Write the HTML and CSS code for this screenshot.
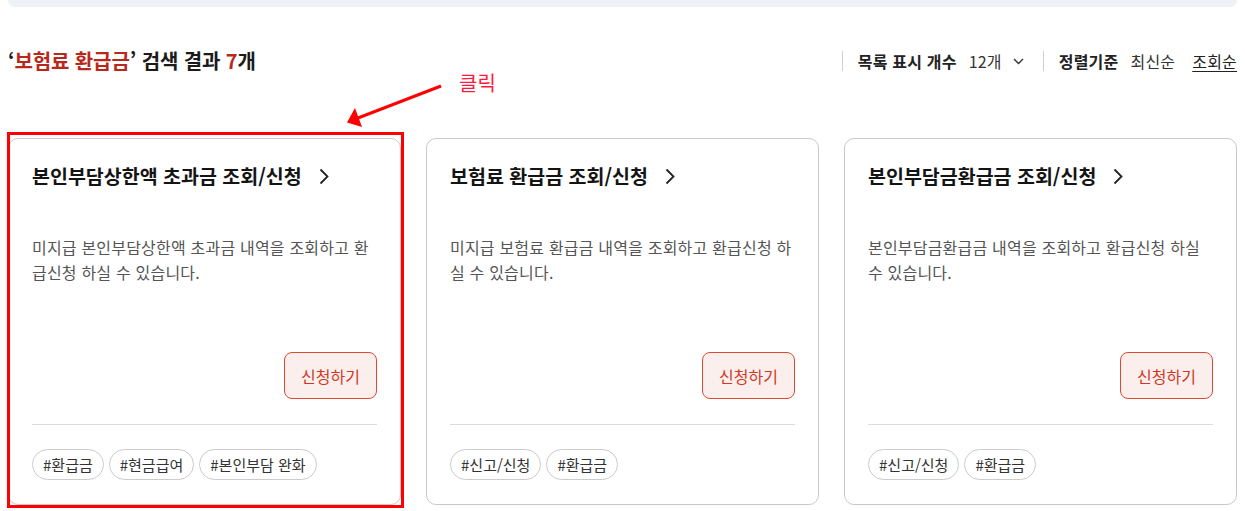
FILE: index.html
```html
<!DOCTYPE html>
<html lang="ko">
<head>
<meta charset="utf-8">
<title>검색 결과</title>
<link rel="stylesheet" href="styles.css">
</head>
<body>
<div class="page">
  <div class="topbar"></div>

  <div class="result-head">
    <h2 class="result-title"><span class="q">‘</span><span class="kw">보험료 환급금</span><span class="q">’</span> 검색 결과 <span class="kw">7</span>개</h2>
    <div class="controls">
      <span class="vdiv"></span>
      <span class="ctl-label">목록 표시 개수</span>
      <span class="ctl-select">12개
        <svg class="chev-down" width="11" height="7" viewBox="0 0 11 7"><path d="M1 1 L5.5 5.5 L10 1" fill="none" stroke="#333" stroke-width="1.4"/></svg>
      </span>
      <span class="vdiv"></span>
      <span class="ctl-label">정렬기준</span>
      <span class="ctl-opt">최신순</span>
      <span class="ctl-opt active">조회순</span>
    </div>
  </div>

  <div class="cards">
    <div class="card">
      <div class="card-title">본인부담상한액 초과금 조회/신청
        <svg class="chev-right" width="10" height="17" viewBox="0 0 10 17"><path d="M1.5 1.5 L8.5 8.5 L1.5 15.5" fill="none" stroke="#222" stroke-width="1.8"/></svg>
      </div>
      <p class="card-desc">미지급 본인부담상한액 초과금 내역을 조회하고 환급신청 하실 수 있습니다.</p>
      <div class="card-actions"><button class="btn-apply">신청하기</button></div>
      <div class="card-tags">
        <span class="tag">#환급금</span><span class="tag">#현금급여</span><span class="tag">#본인부담 완화</span>
      </div>
    </div>
    <div class="card">
      <div class="card-title">보험료 환급금 조회/신청
        <svg class="chev-right" width="10" height="17" viewBox="0 0 10 17"><path d="M1.5 1.5 L8.5 8.5 L1.5 15.5" fill="none" stroke="#222" stroke-width="1.8"/></svg>
      </div>
      <p class="card-desc">미지급 보험료 환급금 내역을 조회하고 환급신청 하실 수 있습니다.</p>
      <div class="card-actions"><button class="btn-apply">신청하기</button></div>
      <div class="card-tags">
        <span class="tag">#신고/신청</span><span class="tag">#환급금</span>
      </div>
    </div>
    <div class="card">
      <div class="card-title">본인부담금환급금 조회/신청
        <svg class="chev-right" width="10" height="17" viewBox="0 0 10 17"><path d="M1.5 1.5 L8.5 8.5 L1.5 15.5" fill="none" stroke="#222" stroke-width="1.8"/></svg>
      </div>
      <p class="card-desc">본인부담금환급금 내역을 조회하고 환급신청 하실 수 있습니다.</p>
      <div class="card-actions"><button class="btn-apply">신청하기</button></div>
      <div class="card-tags">
        <span class="tag">#신고/신청</span><span class="tag">#환급금</span>
      </div>
    </div>
  </div>

  <div class="annot-box"></div>
  <span class="annot-text">클릭</span>
  <svg class="annot-arrow" width="1245" height="511" viewBox="0 0 1245 511">
    <line x1="441" y1="86" x2="358" y2="118" stroke="#ff0000" stroke-width="3"/>
    <polygon points="355,108 347,122.5 362,127" fill="#ff0000"/>
  </svg>
</div>
</body>
</html>
```

FILE: styles.css
```css
* { box-sizing: border-box; }
html, body { margin: 0; padding: 0; background: #fff; }
body {
  font-family: "Noto Sans CJK KR", "Noto Sans", sans-serif;
  color: #222;
  overflow: hidden;
}
.page {
  position: relative;
  padding: 0 8px;
  height: 511px;
}
.topbar {
  height: 7px;
  background: #eef1f5;
  border-radius: 0 0 12px 12px;
}
.result-head {
  display: flex;
  justify-content: space-between;
  align-items: center;
  height: 30px;
  margin-top: 39px;
}
.result-title {
  margin: 0;
  font-size: 20px;
  font-weight: 700;
  letter-spacing: -0.1px;
  color: #1b1b1b;
  line-height: 30px;
}
.result-title .kw { color: #b8291b; }
.result-title .q { color: #1b1b1b; }
.controls {
  display: flex;
  align-items: center;
  font-size: 16px;
  letter-spacing: 0.2px;
  color: #333;
}
.vdiv {
  width: 1px;
  height: 20px;
  background: #cfcfcf;
}
.ctl-label {
  font-weight: 700;
  color: #222;
  margin-left: 15px;
}
.ctl-select {
  display: flex;
  align-items: center;
  margin-left: 12px;
  margin-right: 19px;
  gap: 11px;
}
.chev-down { display: block; }
.ctl-opt { margin-left: 12px; color: #333; }
.ctl-opt.active {
  margin-left: 17px;
  text-decoration: underline;
  text-underline-offset: 3px;
  color: #222;
}
.cards {
  display: grid;
  grid-template-columns: repeat(3, 1fr);
  gap: 25px;
  margin-top: 62px;
}
.card {
  height: 367px;
  border: 1px solid #c9c9c9;
  border-radius: 10px;
  background: #fff;
  padding: 24px 23px 24px 23px;
  display: flex;
  flex-direction: column;
}
.card-title {
  display: flex;
  align-items: center;
  gap: 17px;
  font-size: 19.5px;
  font-weight: 700;
  letter-spacing: 0;
  line-height: 26px;
  color: #141414;
}
.chev-right { display: block; flex: none; }
.card-desc {
  margin: 46px 0 0;
  font-size: 16px;
  letter-spacing: 0.2px;
  line-height: 25px;
  color: #555;
}
.card-actions {
  margin-top: auto;
  display: flex;
  justify-content: flex-end;
  padding-bottom: 25px;
  border-bottom: 1px solid #dcdcdc;
}
.btn-apply {
  height: 47px;
  padding: 0 16px;
  font-family: inherit;
  font-size: 16px;
  color: #d2361f;
  background: #fbefee;
  border: 1px solid #df4a2f;
  border-radius: 8px;
  cursor: pointer;
}
.card-tags {
  display: flex;
  gap: 5px;
  margin-top: 24px;
}
.tag {
  height: 31px;
  line-height: 29px;
  padding: 0 10px;
  border: 1px solid #cbcbcb;
  border-radius: 16px;
  font-size: 15px;
  color: #333;
}
.annot-box {
  position: absolute;
  left: 7px;
  top: 132px;
  width: 397px;
  height: 376px;
  border: 3px solid #ff0000;
  pointer-events: none;
}
.annot-text {
  position: absolute;
  left: 459px;
  top: 69px;
  font-size: 20px;
  line-height: 28px;
  color: #ff1a40;
}
.annot-arrow {
  position: absolute;
  left: 0;
  top: 0;
  pointer-events: none;
}
```
